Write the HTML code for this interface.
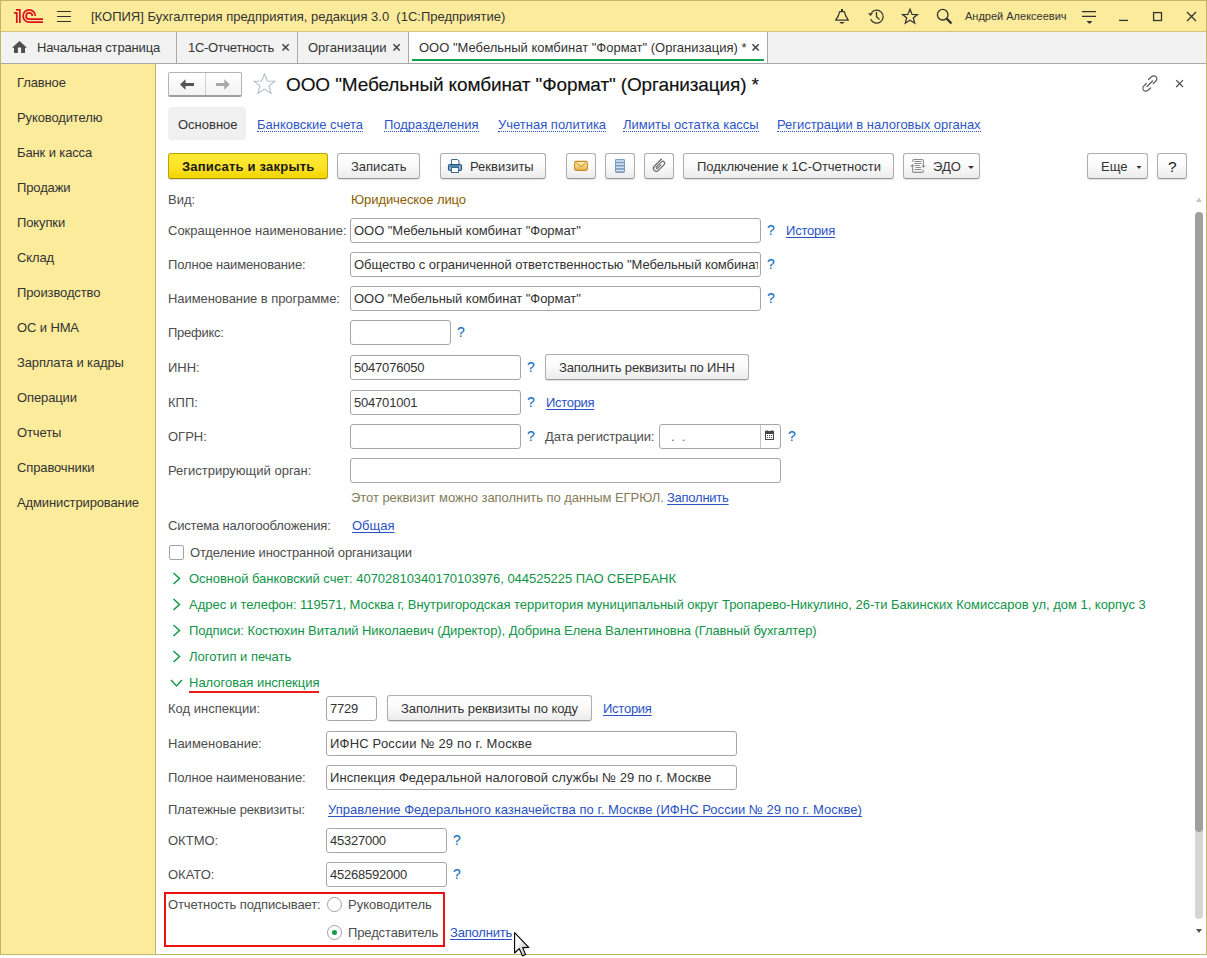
<!DOCTYPE html>
<html><head><meta charset="utf-8">
<style>
*{margin:0;padding:0;box-sizing:border-box}
html,body{width:1207px;height:958px;overflow:hidden;background:#fff}
body{position:relative;font-family:"Liberation Sans",sans-serif;font-size:13px;color:#4d4d4d}
.a{position:absolute}
.t{position:absolute;white-space:nowrap;line-height:15px}
#frame{position:absolute;left:0;top:0;width:1207px;height:955px;border:1px solid #c4b565;z-index:50;pointer-events:none}
#titlebar{position:absolute;left:0;top:0;width:1207px;height:32px;background:#fbeb9b;border-bottom:1px solid #d2c47c}
#tabbar{position:absolute;left:0;top:32px;width:1207px;height:32px;background:#f2f2f2;border-bottom:1px solid #a9a9a9}
#side{position:absolute;left:0;top:64px;width:156px;height:891px;background:#fbeb9b;border-right:1px solid #c2b264}
.sep{position:absolute;top:32px;width:1px;height:31px;background:#a9a9a9}
.mi{position:absolute;left:17px;color:#333;white-space:nowrap;line-height:15px;letter-spacing:-0.12px}
.btn{position:absolute;top:153px;height:26px;border:1px solid #adadad;border-bottom-color:#989898;border-radius:3px;background:linear-gradient(#ffffff 0%,#fbfbfb 45%,#ececec 100%);box-shadow:0 1px 1px rgba(0,0,0,0.12);color:#333}
.ybtn{position:absolute;top:153px;height:26px;border:1px solid #b8a300;border-bottom-color:#a08c00;border-radius:3px;background:linear-gradient(#ffe935 0%,#fde42a 50%,#f3d500 100%);box-shadow:0 1px 1px rgba(0,0,0,0.15);color:#222}
.inp{position:absolute;height:25px;border:1px solid #a6a6a6;border-radius:3px;background:#fff}
.lnk{color:#2a52c4;text-decoration:underline;text-decoration-skip-ink:none;text-underline-offset:2px}
.dl{color:#2d55c5;border-bottom:1px dotted #2d55c5}
.q{position:absolute;color:#176fbf;line-height:15px;font-size:14px;-webkit-text-stroke:0.12px #176fbf}
.g{position:absolute;color:#0f9447;white-space:nowrap;line-height:15px}
.lbl{position:absolute;left:168px;white-space:nowrap;line-height:15px;color:#4d4d4d}
.it{position:absolute;white-space:nowrap;line-height:15px;color:#333}
svg{position:absolute;overflow:visible;z-index:5}
</style></head><body>
<div id="titlebar"></div>
<div id="tabbar"></div>
<div id="side"></div>

<!-- title bar -->
<svg style="left:0;top:0" width="50" height="30" viewBox="0 0 50 30">
 <g fill="none" stroke="#d8141c" stroke-width="1.7">
  <path d="M14 12.95 H16.8 V23"/>
  <path d="M16 9.85 H19.85 V23"/>
  <path d="M35.3 16 A6.12 6.12 0 1 0 29.2 22.1 H43"/>
  <path d="M32.3 16 A3.1 3.1 0 1 0 29.2 19.15 H43"/>
 </g>
</svg>
<svg style="left:0;top:0" width="80" height="30" viewBox="0 0 80 30">
 <g stroke="#333" stroke-width="1.2"><path d="M57 11.5H71M57 16.5H71M57 21.5H71"/></g>
</svg>
<div class="t" style="left:91px;top:9px;color:#333">[КОПИЯ] Бухгалтерия предприятия, редакция 3.0&nbsp; (1С:Предприятие)</div>

<!-- tab bar -->
<svg style="left:0;top:0" width="30" height="60" viewBox="0 0 30 60">
 <path d="M12 47.7 L19.5 40.9 L27 47.7 H25 V53 H21.1 V47.4 H17.9 V53 H14 V47.7 Z" fill="#4f4f4f"/>
</svg>
<div class="t" style="left:37px;top:40px;color:#333;letter-spacing:-0.15px">Начальная страница</div>
<div class="sep" style="left:176px"></div>
<div class="t" style="left:188px;top:40px;color:#333;letter-spacing:-0.33px">1С-Отчетность</div>
<div class="sep" style="left:297px"></div>
<div class="t" style="left:308px;top:40px;color:#333">Организации</div>
<div class="sep" style="left:408px"></div>
<div class="a" style="left:409px;top:32px;width:358px;height:31px;background:#fff"></div>
<div class="a" style="left:412px;top:59px;width:352px;height:2px;background:#14a04c"></div>
<div class="t" style="left:419px;top:40px;color:#333">ООО "Мебельный комбинат "Формат" (Организация) *</div>
<div class="sep" style="left:767px"></div>

<!-- sidebar -->
<div class="mi" style="top:75px">Главное</div>
<div class="mi" style="top:110px">Руководителю</div>
<div class="mi" style="top:145px">Банк и касса</div>
<div class="mi" style="top:180px">Продажи</div>
<div class="mi" style="top:215px">Покупки</div>
<div class="mi" style="top:250px">Склад</div>
<div class="mi" style="top:285px">Производство</div>
<div class="mi" style="top:320px">ОС и НМА</div>
<div class="mi" style="top:355px">Зарплата и кадры</div>
<div class="mi" style="top:390px">Операции</div>
<div class="mi" style="top:425px">Отчеты</div>
<div class="mi" style="top:460px">Справочники</div>
<div class="mi" style="top:495px">Администрирование</div>


<!-- tab close icons -->
<svg style="left:0;top:0" width="1207" height="64" viewBox="0 0 1207 64">
 <g stroke="#444" stroke-width="1.5" stroke-linecap="butt">
  <path d="M282.5 44.3 L288.7 50.5 M288.7 44.3 L282.5 50.5"/>
  <path d="M393.5 44.3 L399.7 50.5 M399.7 44.3 L393.5 50.5"/>
  <path d="M752.5 44.3 L758.7 50.5 M758.7 44.3 L752.5 50.5"/>
 </g>
</svg>

<!-- title bar right icons -->
<svg style="left:0;top:0" width="1207" height="32" viewBox="0 0 1207 32">
 <g fill="none" stroke="#333" stroke-width="1.3">
  <!-- bell -->
  <path d="M835.7 20.1 L838.4 15.6 L839.6 11.6 H844.4 L845.6 15.6 L848.3 20.1 Z" stroke-width="1.25" stroke-linejoin="round"/>
  <!-- history -->
  <path d="M871.3 13 A6.5 6.5 0 1 1 870.7 19.3"/>
  <path d="M876.5 12 V16.6 L879.6 19.6"/>
  <!-- star -->
  <path d="M910 9.3 L912.1 14.4 L917.4 14.6 L913.3 18 L914.7 23.2 L910 20.3 L905.3 23.2 L906.7 18 L902.6 14.6 L907.9 14.4 Z"/>
  <!-- search -->
  <circle cx="942.7" cy="14.7" r="5.3"/>
 </g>
 <path d="M868.1 13.2 H872.9 L870.5 16 Z" fill="#333"/>
 <rect x="841" y="9" width="2" height="2" fill="#333"/>
 <path d="M839.3 22.1 H844.7 Q842 25.2 839.3 22.1 Z" fill="#333"/>
 <path d="M946.5 18.5 L951.5 23.5" stroke="#333" stroke-width="2.4"/>
 <g stroke="#333" stroke-width="1.3" fill="none">
  <path d="M1082 11.6 H1096 M1082 16.3 H1096"/>
  <path d="M1119 20.4 H1128"/>
  <rect x="1153.6" y="12.6" width="7.9" height="7.9"/>
  <path d="M1187 12 L1196 21 M1196 12 L1187 21"/>
 </g>
 <path d="M1086.5 21 H1092.5 L1089.5 24 Z" fill="#333"/>
</svg>
<div class="t" style="left:965px;top:10px;font-size:11px;line-height:13px;color:#333">Андрей Алексеевич</div>

<!-- content header -->
<div class="a" style="left:168px;top:72px;width:74px;height:25px;border:1px solid #b3b3b3;border-bottom:2px solid #9e9e9e;border-radius:2px;background:linear-gradient(#fff,#f3f3f3)"></div>
<div class="a" style="left:205px;top:73px;width:1px;height:22px;background:#d0d0d0"></div>
<svg style="left:0;top:0" width="300" height="100" viewBox="0 0 300 100">
 <path d="M180 84.5 L185.5 79.2 V83 H194 V86 H185.5 V89.8 Z" fill="#555"/>
 <path d="M229.8 84.5 L224.3 79.2 V83 H216 V86 H224.3 V89.8 Z" fill="#a8a8a8"/>
 <path d="M264.5 74 L267.3 81 L274.8 81.3 L269 85.9 L271 93.2 L264.5 89.1 L258 93.2 L260 85.9 L254.2 81.3 L261.7 81 Z" fill="none" stroke="#b4bcc4" stroke-width="1.1"/>
</svg>
<div class="t" style="left:286px;top:75px;font-size:19px;line-height:20px;color:#111;letter-spacing:-0.12px;-webkit-text-stroke:0.15px #111">ООО "Мебельный комбинат "Формат" (Организация) *</div>
<svg style="left:0;top:0" width="1207" height="100" viewBox="0 0 1207 100">
 <g fill="none" stroke="#5a5a5a" stroke-width="1.2" stroke-linecap="round">
  <path d="M1148.5 79.5 L1151.5 76.8 C1153.3 75.2 1155.8 75.6 1156.6 77.6 C1157.2 79 1156.7 80.3 1155.6 81.3 L1153.2 83.5"/>
  <path d="M1150.6 88 L1148 90.3 C1146.3 91.8 1143.8 91.4 1143 89.4 C1142.4 88 1142.9 86.7 1144 85.7 L1146.3 83.5"/>
  <path d="M1147 86.5 L1152.5 81"/>
 </g>
 <path d="M1176.2 80.2 L1183 87 M1183 80.2 L1176.2 87" stroke="#444" stroke-width="1.1"/>
</svg>

<!-- section links -->
<div class="a" style="left:168px;top:107px;width:78px;height:33px;background:#f0f0f0;border-radius:4px"></div>
<div class="t" style="left:178px;top:117px;color:#333">Основное</div>
<div class="t dl" style="left:257px;top:117px;height:15px">Банковские счета</div>
<div class="t dl" style="left:384px;top:117px;height:15px">Подразделения</div>
<div class="t dl" style="left:498px;top:117px;height:15px">Учетная политика</div>
<div class="t dl" style="left:623px;top:117px;height:15px">Лимиты остатка кассы</div>
<div class="t dl" style="left:777px;top:117px;height:15px;letter-spacing:-0.04px">Регистрации в налоговых органах</div>

<!-- toolbar -->
<div class="ybtn" style="left:168px;width:160px"></div>
<div class="t" style="left:182px;top:159px;font-weight:bold;color:#1a1a1a;letter-spacing:0.2px">Записать и закрыть</div>
<div class="btn" style="left:337px;width:83px"></div>
<div class="t" style="left:351px;top:159px;color:#333">Записать</div>
<div class="btn" style="left:440px;width:106px"></div>
<svg style="left:0;top:0" width="480" height="180" viewBox="0 0 480 180">
 <path d="M451.5 165 V159.5 H457.5 L459 161 V165" fill="#fff" stroke="#3b6a93" stroke-width="1"/>
 <rect x="448.5" y="164.5" width="13" height="6" rx="1.5" fill="#8db1d3" stroke="#24557f" stroke-width="1.2"/>
 <rect x="451.5" y="167.5" width="7" height="5" fill="#fff" stroke="#3b6a93" stroke-width="1"/>
 <path d="M450 166 H459" stroke="#24557f" stroke-width="1"/>
</svg>
<div class="t" style="left:470px;top:159px;color:#333">Реквизиты</div>
<div class="btn" style="left:566px;width:30px"></div>
<svg style="left:0;top:0" width="700" height="180" viewBox="0 0 700 180">
 <defs><linearGradient id="env" x1="0" y1="0" x2="0" y2="1"><stop offset="0" stop-color="#fdf1b8"/><stop offset="1" stop-color="#e9b552"/></linearGradient></defs>
 <rect x="574.6" y="161.4" width="12.8" height="9" rx="1.6" fill="url(#env)" stroke="#c98a22" stroke-width="1.1"/>
 <path d="M576 162.6 L581 166.6 L586 162.6" fill="none" stroke="#cf952f" stroke-width="1"/>
 <path d="M575.8 170 L579.6 166.3 M586.2 170 L582.4 166.3" fill="none" stroke="#dcae56" stroke-width="0.8"/>
 <rect x="615" y="159" width="10" height="14" rx="1.4" fill="#7b9dbd"/>
 <g fill="#cfe0f0"><rect x="616" y="160.2" width="8" height="1.6"/><rect x="616" y="163.3" width="8" height="1.6"/><rect x="616" y="166.5" width="8" height="1.6"/><rect x="616" y="169.7" width="8" height="1.6"/></g>
 <g transform="translate(659 165.6) rotate(45)" fill="none" stroke="#666" stroke-width="1.15">
  <path d="M-2.9 -6.8 V3.8 A2.9 2.9 0 0 0 2.9 3.8 V-4.4 A1.9 1.9 0 0 0 -0.9 -4.4 V2.8 A0.9 0.9 0 0 0 0.9 2.8 V-2.2"/>
 </g>
</svg>
<div class="btn" style="left:605px;width:30px"></div>
<div class="btn" style="left:644px;width:30px"></div>
<div class="btn" style="left:683px;width:211px"></div>
<div class="t" style="left:697px;top:159px;color:#333;letter-spacing:-0.08px">Подключение к 1С-Отчетности</div>
<div class="btn" style="left:903px;width:77px"></div>
<svg style="left:0;top:0" width="1207" height="180" viewBox="0 0 1207 180">
 <g fill="none" stroke="#8c8c8c" stroke-width="1.1">
  <path d="M912.5 161.8 V161 Q912.5 159.5 914 159.5 H922 Q923.4 159.5 923.4 161 V165.6"/>
  <path d="M912.5 166.5 V171 Q912.5 172.4 914 172.4 H922 Q923.4 172.4 923.4 171 V169.9"/>
  <path d="M914.2 161.5 H921.5 M914.2 163.5 H921.5 M915.2 165.5 H919.8 M915.6 167.5 H921 M914.2 169.5 H921.5"/>
 </g>
 <path d="M910 166.6 L912.5 164 L915 166.6 Z M921.2 165.5 L923.4 167.9 L925.8 165.5 Z" fill="#8c8c8c"/>
 <path d="M968 166 H974 L971 169 Z" fill="#333"/>
 <path d="M1136.5 166 H1141.5 L1139 169 Z" fill="#333"/>
</svg>
<div class="t" style="left:933px;top:159px;color:#333">ЭДО</div>
<div class="btn" style="left:1087px;width:61px"></div>
<div class="t" style="left:1101px;top:159px;color:#333">Еще</div>
<div class="btn" style="left:1157px;width:30px"></div>
<div class="t" style="left:1168px;top:159px;font-size:15.5px;color:#1a1a1a">?</div>


<!-- form -->
<div class="lbl" style="top:192px">Вид:</div>
<div class="t" style="left:351px;top:192px;color:#8a5d00;letter-spacing:-0.08px">Юридическое лицо</div>

<div class="lbl" style="top:223px">Сокращенное наименование:</div>
<div class="inp" style="left:350px;top:218px;width:411px"></div>
<div class="it" style="left:354px;top:223px;letter-spacing:-0.04px">ООО "Мебельный комбинат "Формат"</div>
<div class="q" style="left:767px;top:223px">?</div>
<div class="t lnk" style="left:786px;top:223px;letter-spacing:-0.2px">История</div>

<div class="lbl" style="top:257px;letter-spacing:-0.16px">Полное наименование:</div>
<div class="inp" style="left:350px;top:252px;width:411px"></div>
<div class="it" style="left:354px;top:257px;width:404px;overflow:hidden;letter-spacing:-0.065px">Общество с ограниченной ответственностью "Мебельный комбинат "Формат"</div>
<div class="q" style="left:767px;top:257px">?</div>

<div class="lbl" style="top:291px;letter-spacing:-0.07px">Наименование в программе:</div>
<div class="inp" style="left:350px;top:286px;width:411px"></div>
<div class="it" style="left:354px;top:291px;letter-spacing:-0.04px">ООО "Мебельный комбинат "Формат"</div>
<div class="q" style="left:767px;top:291px">?</div>

<div class="lbl" style="top:325px;letter-spacing:-0.25px">Префикс:</div>
<div class="inp" style="left:350px;top:320px;width:101px"></div>
<div class="q" style="left:457px;top:325px">?</div>

<div class="lbl" style="top:360px">ИНН:</div>
<div class="inp" style="left:350px;top:355px;width:171px"></div>
<div class="it" style="left:354px;top:360px;letter-spacing:-0.2px">5047076050</div>
<div class="q" style="left:527px;top:360px">?</div>
<div class="btn" style="left:545px;top:354px;width:204px"></div>
<div class="t" style="left:559px;top:360px;color:#333;letter-spacing:-0.16px">Заполнить реквизиты по ИНН</div>

<div class="lbl" style="top:395px">КПП:</div>
<div class="inp" style="left:350px;top:390px;width:171px"></div>
<div class="it" style="left:354px;top:395px;letter-spacing:-0.2px">504701001</div>
<div class="q" style="left:527px;top:395px">?</div>
<div class="t lnk" style="left:546px;top:395px;letter-spacing:-0.3px">История</div>

<div class="lbl" style="top:429px">ОГРН:</div>
<div class="inp" style="left:350px;top:424px;width:171px"></div>
<div class="q" style="left:527px;top:429px">?</div>
<div class="t" style="left:545px;top:429px;letter-spacing:-0.12px">Дата регистрации:</div>
<div class="inp" style="left:659px;top:424px;width:122px"></div>
<div class="a" style="left:760px;top:425px;width:1px;height:23px;background:#c4c4c4"></div>
<div class="it" style="left:671px;top:429px;color:#666">.&nbsp; .</div>
<svg style="left:0;top:0" width="800" height="450" viewBox="0 0 800 450">
 <rect x="765" y="431" width="9" height="9" fill="#444"/>
 <path d="M767 430 V432 M772 430 V432" stroke="#444" stroke-width="1"/>
 <path d="M766 434 H773 V439 H766 Z" fill="#fff"/>
 <g fill="#444"><rect x="767" y="435" width="1" height="1"/><rect x="769" y="435" width="1" height="1"/><rect x="771" y="435" width="1" height="1"/><rect x="767" y="437" width="1" height="1"/><rect x="769" y="437" width="1" height="1"/><rect x="771" y="437" width="1" height="1"/></g>
</svg>
<div class="q" style="left:788px;top:429px">?</div>

<div class="lbl" style="top:463px">Регистрирующий орган:</div>
<div class="inp" style="left:350px;top:458px;width:431px"></div>
<div class="t" style="left:351px;top:490px;color:#847c5a;letter-spacing:-0.05px">Этот реквизит можно заполнить по данным ЕГРЮЛ.</div>
<div class="t lnk" style="left:667px;top:490px;letter-spacing:-0.25px">Заполнить</div>

<div class="lbl" style="top:518px;letter-spacing:-0.18px">Система налогообложения:</div>
<div class="t lnk" style="left:352px;top:518px">Общая</div>

<div class="a" style="left:169px;top:545px;width:15px;height:15px;border:1px solid #a3a3a3;border-radius:2px;background:#fff"></div>
<div class="t" style="left:190px;top:545px;letter-spacing:-0.15px">Отделение иностранной организации</div>

<svg style="left:0;top:0" width="200" height="700" viewBox="0 0 200 700">
 <g fill="none" stroke="#12994a" stroke-width="1.5">
  <path d="M173.5 573 L179.5 578.5 L173.5 584"/>
  <path d="M173.5 599 L179.5 604.5 L173.5 610"/>
  <path d="M173.5 625 L179.5 630.5 L173.5 636"/>
  <path d="M173.5 651 L179.5 656.5 L173.5 662"/>
  <path d="M171 680 L176.5 686 L182 680"/>
 </g>
</svg>
<div class="g" style="left:189px;top:571px;letter-spacing:-0.03px">Основной банковский счет: 40702810340170103976, 044525225 ПАО СБЕРБАНК</div>
<div class="g" style="left:189px;top:597px;letter-spacing:-0.02px">Адрес и телефон: 119571, Москва г, Внутригородская территория муниципальный округ Тропарево-Никулино, 26-ти Бакинских Комиссаров ул, дом 1, корпус 3</div>
<div class="g" style="left:189px;top:623px;letter-spacing:-0.085px">Подписи: Костюхин Виталий Николаевич (Директор), Добрина Елена Валентиновна (Главный бухгалтер)</div>
<div class="g" style="left:189px;top:649px">Логотип и печать</div>
<div class="g" style="left:189px;top:675px">Налоговая инспекция</div>
<div class="a" style="left:189px;top:691px;width:130px;height:2px;background:#ee1c1c"></div>

<div class="lbl" style="top:701px">Код инспекции:</div>
<div class="inp" style="left:326px;top:696px;width:51px"></div>
<div class="it" style="left:330px;top:701px;letter-spacing:-0.2px">7729</div>
<div class="btn" style="left:387px;top:695px;width:205px"></div>
<div class="t" style="left:401px;top:701px;color:#333;letter-spacing:-0.06px">Заполнить реквизиты по коду</div>
<div class="t lnk" style="left:603px;top:701px;letter-spacing:-0.25px">История</div>

<div class="lbl" style="top:736px">Наименование:</div>
<div class="inp" style="left:326px;top:731px;width:411px"></div>
<div class="it" style="left:330px;top:736px;letter-spacing:0.2px">ИФНС России № 29 по г. Москве</div>

<div class="lbl" style="top:770px;letter-spacing:-0.16px">Полное наименование:</div>
<div class="inp" style="left:326px;top:765px;width:411px"></div>
<div class="it" style="left:330px;top:770px;letter-spacing:0.055px">Инспекция Федеральной налоговой службы № 29 по г. Москве</div>

<div class="lbl" style="top:802px;letter-spacing:-0.12px">Платежные реквизиты:</div>
<div class="t lnk" style="left:328px;top:802px;letter-spacing:0.027px">Управление Федерального казначейства по г. Москве (ИФНС России № 29 по г. Москве)</div>

<div class="lbl" style="top:833px">ОКТМО:</div>
<div class="inp" style="left:326px;top:828px;width:121px"></div>
<div class="it" style="left:330px;top:833px;letter-spacing:-0.25px">45327000</div>
<div class="q" style="left:453px;top:833px">?</div>

<div class="lbl" style="top:867px">ОКАТО:</div>
<div class="inp" style="left:326px;top:862px;width:121px"></div>
<div class="it" style="left:330px;top:867px;letter-spacing:-0.22px">45268592000</div>
<div class="q" style="left:453px;top:867px">?</div>

<div class="a" style="left:164px;top:892px;width:281px;height:55px;border:2px solid #ee1111"></div>
<div class="lbl" style="top:897px;letter-spacing:-0.1px">Отчетность подписывает:</div>
<div class="a" style="left:327px;top:897px;width:15px;height:15px;border:1px solid #a0a0a0;border-radius:50%;background:#fff"></div>
<div class="t" style="left:348px;top:897px">Руководитель</div>
<div class="a" style="left:327px;top:925px;width:15px;height:15px;border:1px solid #a0a0a0;border-radius:50%;background:#fff"></div>
<div class="a" style="left:332px;top:930px;width:5px;height:5px;border-radius:50%;background:#12994a"></div>
<div class="t" style="left:348px;top:925px;letter-spacing:-0.13px">Представитель</div>
<div class="t lnk" style="left:450px;top:925px;letter-spacing:-0.2px">Заполнить</div>

<!-- scrollbar -->
<div class="a" style="left:1195px;top:212px;width:8px;height:707px;background:#d6d6d6;border-radius:4px"></div>
<div class="a" style="left:1195px;top:212px;width:8px;height:620px;background:#a0a0a0;border-radius:4px"></div>
<svg style="left:0;top:0" width="1207" height="958" viewBox="0 0 1207 958">
 <path d="M1196 202 H1202 L1199 197.5 Z" fill="#c6c6c6"/>
 <path d="M1196 929 H1202 L1199 933 Z" fill="#555"/>
</svg>
<svg style="left:0;top:0;z-index:60" width="1207" height="958" viewBox="0 0 1207 958">
 <defs><linearGradient id="cur" x1="0" y1="0" x2="1" y2="1"><stop offset="0.3" stop-color="#ffffff"/><stop offset="1" stop-color="#a8a8a8"/></linearGradient></defs>
 <path d="M514.6 932.6 L514.6 953 L519.3 948.7 L522.4 955.9 L525.7 954.6 L522.7 947.6 L528.7 947.4 Z" fill="url(#cur)" stroke="#000" stroke-width="1.1" stroke-linejoin="round"/>
</svg>

<div id="frame"></div>
</body></html>
